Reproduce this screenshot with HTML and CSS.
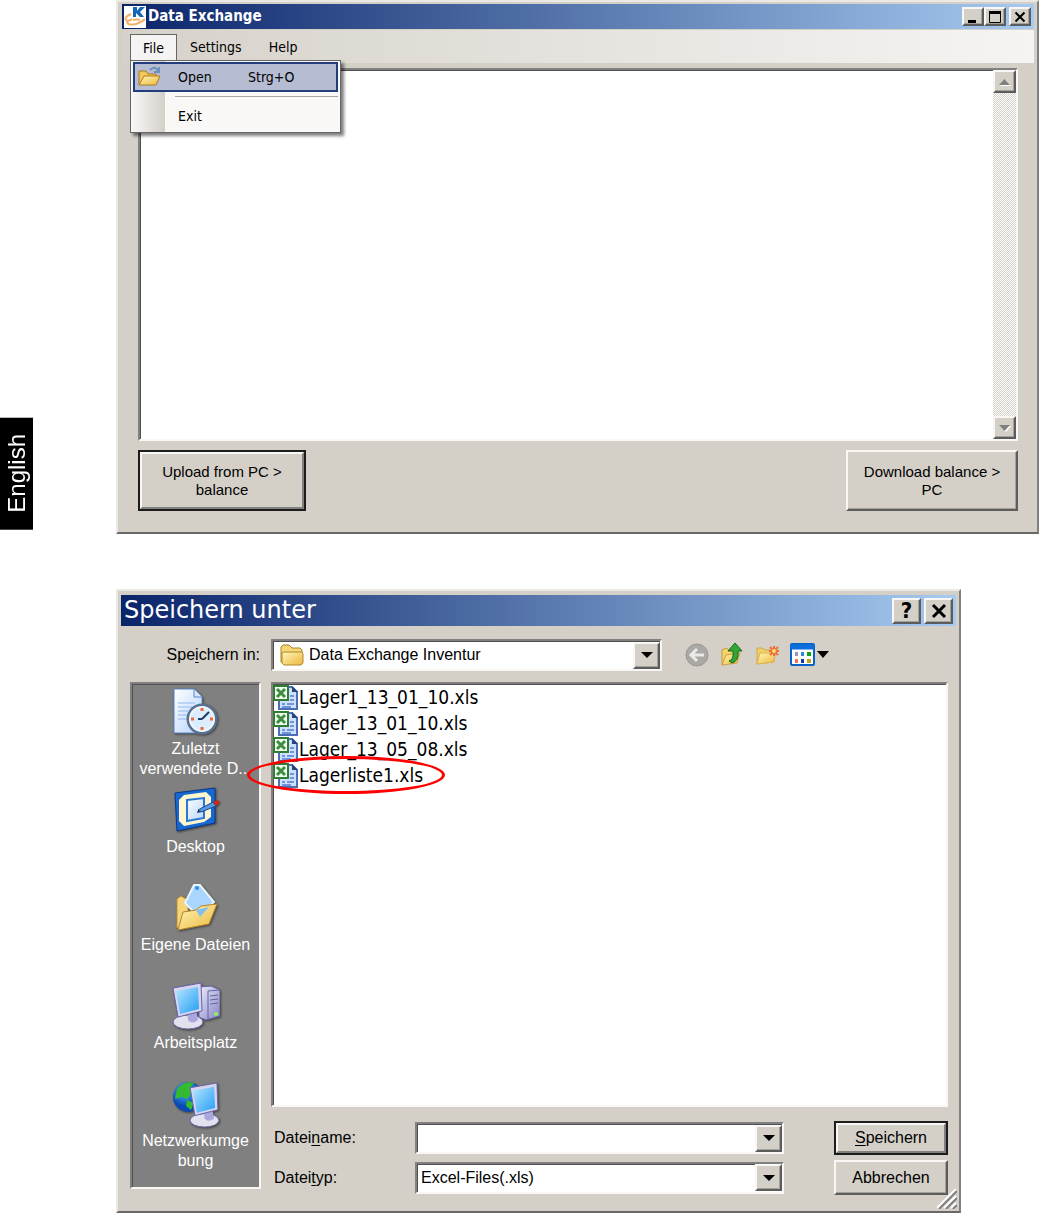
FILE: index.html
```html
<!DOCTYPE html>
<html lang="en">
<head>
<meta charset="utf-8">
<title>Data Exchange</title>
<link rel="stylesheet" href="styles.css">
</head>
<body>
<svg class="defs" aria-hidden="true">
  <defs>
    <linearGradient id="gold" x1="0" y1="0" x2="1" y2="1"><stop offset="0" stop-color="#fff6b8"/><stop offset="1" stop-color="#edb73c"/></linearGradient>
    <linearGradient id="screen" x1="0" y1="0" x2="1" y2="1"><stop offset="0" stop-color="#b5e6ff"/><stop offset="1" stop-color="#249df4"/></linearGradient>
    <linearGradient id="paper" x1="0" y1="0" x2="1" y2="1"><stop offset="0" stop-color="#ffffff"/><stop offset="1" stop-color="#b4d3fb"/></linearGradient>
    <linearGradient id="case" x1="0" y1="0" x2="1" y2="1"><stop offset="0" stop-color="#ececfa"/><stop offset="1" stop-color="#8583c4"/></linearGradient>
    <radialGradient id="globe" cx=".4" cy=".3"><stop offset="0" stop-color="#4db7ff"/><stop offset="1" stop-color="#0b49b4"/></radialGradient>
    <symbol id="excel" viewBox="0 0 25 25">
      <path d="M6 2h13l5 5v17H6z" fill="#cfe0ff" stroke="#4a6fb8" stroke-width="2"/>
      <path d="M19 1v6h6z" fill="#27457e"/>
      <path d="M17 11h4M17 15h4M9 19h3M14 19h7M9 22h9" stroke="#6f95dc" stroke-width="2"/>
      <path d="M1 1h14v14H1z" fill="#f4fbf2" stroke="#2f7d32" stroke-width="2"/>
      <path d="M4 4l8 8M12 4l-8 8" stroke="#3b8f3e" stroke-width="3"/>
    </symbol>
    <symbol id="monitor" viewBox="0 0 32 48">
      <ellipse cx="16" cy="40" rx="15" ry="7" fill="#e2e2ee" stroke="#6a68a0"/>
      <path d="M15 27h9l2 11q-6 5-10 0z" fill="#a9a7dc"/>
      <path d="M1 6l28-5 1 28-24 6z" fill="#d5d5f0" stroke="#6663a6"/>
      <path d="M4 9l22-4 1 22-19 5z" fill="url(#screen)"/>
    </symbol>
  </defs>
</svg>

<div class="page">
  <aside class="language">English</aside>

  <main class="windows">
    <section class="window app" aria-label="Data Exchange">
      <header class="titlebar">
        <svg class="app-logo" viewBox="0 0 22 22" aria-hidden="true">
          <rect width="22" height="22" fill="#fff"/>
          <path d="M9 1h4v4l3-4h5l-5 5 4 5h-4l-4-4v4H9z" fill="#1466b8"/>
          <path d="M7 8Q0 11 2 14q3 2 6-1M3 15q0 5 9 3 6-2 9-5M9 14q4-1 7 0" fill="none" stroke="#f4b069" stroke-width="2"/>
        </svg>
        <h1 class="title">Data Exchange</h1>
        <div class="controls">
          <button class="control raised" aria-label="Minimize"><svg viewBox="0 0 16 14"><path d="M3 11.5h8" stroke="#000" stroke-width="3"/></svg></button>
          <button class="control raised" aria-label="Maximize"><svg viewBox="0 0 16 14"><path d="M2.500 1.500h11v11h-11z" fill="none" stroke="#000"/><path d="M2 2.500h12" stroke="#000" stroke-width="3"/></svg></button>
          <button class="control control-close raised" aria-label="Close"><svg viewBox="0 0 16 14"><path d="M3.500 2.500l9 9M12.500 2.500l-9 9" stroke="#000" stroke-width="2"/></svg></button>
        </div>
      </header>
      <nav class="menubar">
        <div class="menu">
          <button class="menu-button menu-open">File</button>
          <div class="dropdown">
            <button class="entry entry-active">
              <svg class="entry-icon" viewBox="0 0 24 22" aria-hidden="true">
                <path d="M2 19V5h7l2 3h8v4" fill="#f3c757" stroke="#a77a29"/>
                <path d="M2 19l5-9h16l-4 9z" fill="url(#gold)" stroke="#b07a1e"/>
                <path d="M13 4q5-5 8 1M22 1v5h-5" fill="none" stroke="#6d8fbe" stroke-width="2"/>
              </svg>
              <span class="entry-name">Open</span><span>Strg+O</span>
            </button>
            <div class="divider"></div>
            <button class="entry"><span class="entry-icon"></span><span>Exit</span></button>
          </div>
        </div>
        <button class="menu-button">Settings</button>
        <button class="menu-button">Help</button>
      </nav>
      <div class="app-body">
        <div class="log sunken">
          <textarea class="log-text" aria-label="Transferred data"></textarea>
          <div class="scrollbar">
            <button class="scroll-arrow raised" aria-label="Scroll up"><svg viewBox="0 0 12 8"><path d="M1 8h11l-5-6z" fill="#fff"/><path d="M0 7h11L5.500 1z" fill="#808080"/></svg></button>
            <button class="scroll-arrow raised" aria-label="Scroll down"><svg viewBox="0 0 12 8"><path d="M1 2h11L7 8z" fill="#fff"/><path d="M0 1h11L5.500 7z" fill="#808080"/></svg></button>
          </div>
        </div>
        <div class="actions">
          <button class="action action-upload raised default">Upload from PC &gt;<br>balance</button>
          <button class="action action-download raised">Download balance &gt;<br>PC</button>
        </div>
      </div>
    </section>

    <section class="window dialog" aria-label="Speichern unter" lang="de">
      <header class="titlebar dialog-titlebar">
        <h2 class="dialog-title">Speichern unter</h2>
        <div class="controls dialog-controls">
          <button class="dialog-control raised" aria-label="Hilfe">?</button>
          <button class="dialog-control raised" aria-label="Schließen"><svg viewBox="0 0 18 16"><path d="M3 2l12 12M15 2L3 14" stroke="#000" stroke-width="3"/></svg></button>
        </div>
      </header>
      <div class="dialog-body">
        <label class="location-label" for="location">Spe<u>i</u>chern in:</label>
        <div class="location">
          <div class="combo sunken">
            <svg class="folder" viewBox="0 0 26 26" aria-hidden="true">
              <path d="M2 20V5l2-2h6l3 3h8l2 2v12z" fill="#f5d775" stroke="#a7842a"/>
              <path d="M3 21V11l2-1h18l1 2v9l-2 2H5z" fill="url(#gold)" stroke="#ae892d"/>
            </svg>
            <select class="combo-field" id="location"><option>Data Exchange Inventur</option></select>
            <span class="combo-arrow raised"><svg viewBox="0 0 12 6"><path d="M0 0h12L6 6z"/></svg></span>
          </div>
          <div class="tools">
            <button class="tool" aria-label="Zurück"><svg viewBox="0 0 24 24"><circle cx="12" cy="12" r="11" fill="#aaa9a5" stroke="#989794"/><path d="M19 12H7M12 6l-6 6 6 6" fill="none" stroke="#eceae6" stroke-width="3"/></svg></button>
            <button class="tool" aria-label="Übergeordneter Ordner"><svg viewBox="0 0 24 24"><path d="M2 22V7l4-2 3 2h8v10z" fill="#f2d36c" stroke="#c49b3a"/><path d="M2 22l4-10 14-2-3 10z" fill="url(#gold)" stroke="#cba13c"/><path d="M9 18q5-1 4-10H8l7-8 7 8h-4q1 10-6 12z" fill="#33a437" stroke="#146c1b"/></svg></button>
            <button class="tool" aria-label="Neuer Ordner"><svg viewBox="0 0 24 24"><path d="M2 21V5h5l3 2h9v12z" fill="#f1cf68" stroke="#d1a848"/><path d="M2 21l3-11h16l-3 9z" fill="url(#gold)" stroke="#dcb450"/><path d="M19 3v10M14 8h10M15 4l8 8M23 4l-8 8" stroke="#ed6d42" stroke-width="2"/><circle cx="19" cy="8" r="2" fill="#ffe25d"/></svg></button>
            <button class="tool tool-view" aria-label="Ansicht"><svg viewBox="0 0 40 24"><rect x="1" y="1" width="23" height="21" rx="1" fill="#fff" stroke="#0862c9" stroke-width="2"/><path d="M1 4h23" stroke="#0b6fdf" stroke-width="5"/><path d="M5 9h3v4H5z" fill="#9b90c8"/><path d="M11 9h3v4h-3z" fill="#3484e0"/><path d="M17 9h4v4h-4z" fill="#0da31a"/><path d="M5 16h3v4H5z" fill="#ff7048"/><path d="M11 16h3v4h-3z" fill="#12399c"/><path d="M17 16h4v4h-4z" fill="#cb9f16"/><path d="M27 8h12l-6 7z"/></svg></button>
          </div>
        </div>

        <nav class="places sunken">
          <button class="place">
            <svg class="place-icon" viewBox="0 0 48 48" aria-hidden="true">
              <path d="M2 1h20l8 8v36H2z" fill="url(#paper)" stroke="#5884c6"/>
              <path d="M22 1v8h8" fill="#d5e8ff" stroke="#5884c6"/>
              <path d="M6 15h17M6 19h14M6 23h10M6 27h9M6 31h9" stroke="#90b9f2"/>
              <circle cx="30" cy="31" r="14" fill="#dbeeff" stroke="#59718f" stroke-width="3"/>
              <circle cx="30" cy="31" r="12" fill="none" stroke="#edf7ff" stroke-width="2"/>
              <path d="M30 31l7-7M30 31h-4" stroke="#233d60" stroke-width="2"/>
              <path d="M30 20v3M30 39v3M19 31h3M38 31h3" stroke="#f2682f" stroke-width="3"/>
            </svg>
            <span>Zuletzt<br>verwendete D...</span>
          </button>
          <button class="place">
            <svg class="place-icon" viewBox="0 0 48 48" aria-hidden="true">
              <path d="M3 7l40-5v35L5 45z" fill="#1768d0" stroke="#08398c"/>
              <path d="M12 9l22-3 5 5v20l-7 5-20 4-5-5V14z" fill="#fff5cf"/>
              <path d="M15 14l17-2v20l-17 3z" fill="url(#paper)" stroke="#2878d4" stroke-width="2"/>
              <path d="M26 24l15-8 3 4-15 6z" fill="#5997e2" stroke="#164c91"/>
              <path d="M41 16l4-2 3 2-4 4z" fill="#cf2717"/><path d="M26 24l3 2-4 1z" fill="#152e54"/>
            </svg>
            <span>Desktop</span>
          </button>
          <button class="place">
            <svg class="place-icon" viewBox="0 0 48 48" aria-hidden="true">
              <path d="M5 44V15l4-3 7 4v24z" fill="#f6d478" stroke="#c0923a"/>
              <path d="M22 1h6l14 17-15 15-14-14z" fill="#a9d5ff" stroke="#e7f5ff" stroke-width="2"/>
              <circle cx="25" cy="4" r="2" fill="#328de8"/>
              <path d="M6 46l5-18 13-2 5-4 16-2-8 20z" fill="url(#gold)" stroke="#b48427"/>
              <path d="M24 26l13-3-9 10z" fill="#80bff2"/>
            </svg>
            <span>Eigene Dateien</span>
          </button>
          <button class="place">
            <svg class="place-icon" viewBox="0 0 48 48" aria-hidden="true">
              <path d="M27 5l12-1 9 4v26l-14 4-7-3z" fill="url(#case)" stroke="#6562a5"/>
              <path d="M36 9l12-1M36 9v29M38 14l8-1M38 18l8-1M38 22l8-1" stroke="#6562a5"/>
              <circle cx="44" cy="32" r="2" fill="#8df35a"/>
              <use href="#monitor" width="32" height="48"/>
            </svg>
            <span>Arbeitsplatz</span>
          </button>
          <button class="place">
            <svg class="place-icon" viewBox="0 0 48 48" aria-hidden="true">
              <circle cx="16" cy="17" r="15" fill="url(#globe)"/>
              <path d="M5 9q7-9 17-6l-4 5 4 2-7 9-5-2-7 2zM15 20l7 3-3 7-5-4z" fill="#34b930"/>
              <use href="#monitor" x="17" y="2" width="31" height="46"/>
            </svg>
            <span>Netzwerkumge<br>bung</span>
          </button>
        </nav>

        <div class="files sunken">
          <ul class="file-list">
            <li class="file"><svg class="file-icon" aria-hidden="true"><use href="#excel"/></svg>Lager1_13_01_10.xls</li>
            <li class="file"><svg class="file-icon" aria-hidden="true"><use href="#excel"/></svg>Lager_13_01_10.xls</li>
            <li class="file"><svg class="file-icon" aria-hidden="true"><use href="#excel"/></svg>Lager_13_05_08.xls</li>
            <li class="file marked"><svg class="file-icon" aria-hidden="true"><use href="#excel"/></svg>Lagerliste1.xls</li>
          </ul>
        </div>

        <form class="save-form">
          <label for="filename">Datei<u>n</u>ame:</label>
          <div class="combo sunken">
            <input class="combo-field" id="filename" type="text">
            <button class="combo-arrow raised" type="button" aria-label="Dateinamen anzeigen"><svg viewBox="0 0 12 6"><path d="M0 0h12L6 6z"/></svg></button>
          </div>
          <button class="form-button form-save raised default" type="submit"><u>S</u>peichern</button>
          <label for="filetype">Datei<u>t</u>yp:</label>
          <div class="combo sunken">
            <select class="combo-field" id="filetype"><option>Excel-Files(.xls)</option></select>
            <span class="combo-arrow raised"><svg viewBox="0 0 12 6"><path d="M0 0h12L6 6z"/></svg></span>
          </div>
          <button class="form-button raised" type="button">Abbrechen</button>
        </form>
      </div>
      <svg class="grip" viewBox="0 0 20 20" aria-hidden="true"><path d="M0 19L19 0M7 19L19 7M14 19l5-5" stroke="#fff" stroke-width="2"/><path d="M2 20L20 2M9 20L20 9M16 20l4-4" stroke="#808080" stroke-width="2"/></svg>
    </section>
  </main>
</div>
</body>
</html>
```
FILE: styles.css
```css
*,
*::after {
  box-sizing: border-box;
}

body {
  margin: 0;
  background: #fff;
  color: #000;
  font: 16px/20px "Liberation Sans", Arial, sans-serif;
}

button,
input,
select,
textarea {
  margin: 0;
  padding: 0;
  border: 0;
  border-radius: 0;
  background: none;
  color: inherit;
  font: inherit;
}

h1,
h2,
ul {
  margin: 0;
  padding: 0;
}

svg {
  display: block;
  flex: none;
}

u {
  text-underline-offset: 2px;
}

.defs {
  position: absolute;
  width: 0;
  height: 0;
}

.page {
  display: flex;
  align-items: flex-start;
  gap: 83px;
  padding-right: 4px;
}

.language {
  flex: none;
  width: 33px;
  margin-top: 418px;
  padding: 17px 0 16px;
  background: #000;
  color: #fff;
  font-size: 24px;
  line-height: 33px;
  writing-mode: vertical-rl;
  transform: rotate(180deg);
}

.windows {
  flex: 1;
  min-width: 0;
}

/* Bevels */
.raised {
  border: 2px solid;
  border-color: #f8f7f5 #5c5c5c #5c5c5c #f8f7f5;
  background: #d4d0c8;
  box-shadow: inset -1px -1px #a5a29c;
}

.default {
  outline: 2px solid #1c1c1c;
  outline-offset: -2px;
  border-width: 4px;
  border-color: #f8f7f5 #808080 #808080 #f8f7f5;
  box-shadow: none;
}

.sunken {
  border: 2px solid;
  border-color: #808080 #f8f7f5 #f8f7f5 #808080;
  background: #fff;
  box-shadow: inset 1px 1px #505050;
}

.window {
  position: relative;
  border: 2px solid;
  border-color: #ebe9e5 #808080 #686868 #ebe9e5;
  background: #d4d0c8;
}

.titlebar {
  display: flex;
  align-items: center;
  background: linear-gradient(90deg, #0a246a, #a6caf0);
  color: #fff;
}

.controls {
  display: flex;
  margin-left: auto;
}

/* Main window */
.app {
  padding: 2px 3px 21px 4px;
}

.app .titlebar {
  height: 25px;
  padding: 0 3px 0 2px;
}

.app-logo {
  width: 22px;
  height: 22px;
}

.title {
  margin-left: 2px;
  font: bold 15px/25px "DejaVu Sans Condensed", "DejaVu Sans", sans-serif;
}

.control {
  display: grid;
  place-items: center;
  width: 22px;
  height: 19px;
}

.control svg {
  width: 16px;
  height: 14px;
}

.control-close {
  margin-left: 3px;
}

.menubar {
  display: flex;
  height: 34px;
  padding: 4px 8px 0;
  border-top: 1px solid #d4d0c8;
  background: linear-gradient(90deg, #d6d2ca, #f5f4f2);
  font: 14px/24px "DejaVu Sans Condensed", "DejaVu Sans", sans-serif;
}

.menu {
  position: relative;
}

.menu-button {
  height: 27px;
  padding: 0 14px 2px 13px;
}

.menu-open {
  width: 47px;
  padding: 0 0 1px;
  border: 1px solid #666;
  border-bottom: 0;
  background: #f5f4f2;
}

.dropdown {
  position: absolute;
  z-index: 1;
  top: 26px;
  left: 0;
  width: 211px;
  padding: 1px 2px;
  border: 1px solid #666;
  background: linear-gradient(90deg, #f9f8f7, #d4d0c8 34px, #f9f8f7 34px);
  box-shadow: 3px 3px 3px #00000080;
}

.entry {
  display: flex;
  align-items: center;
  width: 100%;
  height: 30px;
  padding: 0 3px;
  border: 1px solid transparent;
  text-align: left;
}

.entry-active {
  border: 2px solid #233c7c;
  padding: 0 2px;
  background: #b6bdd2;
}

.entry-icon {
  width: 24px;
  height: 22px;
  margin-right: 17px;
}

.entry-name {
  width: 70px;
}

.divider {
  height: 1px;
  margin: 4px 0 4px 42px;
  background: #a6a6a6;
}

.app-body {
  padding: 5px 16px 0;
}

.log {
  display: flex;
  height: 373px;
}

.log-text {
  flex: 1;
  min-width: 0;
  padding: 4px;
  resize: none;
}

.scrollbar {
  display: flex;
  flex-direction: column;
  justify-content: space-between;
  width: 23px;
  background: repeating-conic-gradient(#fff 0 25%, #d4d0c8 0 50%) 0 0 / 2px 2px;
}

.scroll-arrow {
  display: grid;
  place-items: center;
  height: 23px;
}

.scroll-arrow svg {
  width: 12px;
  height: 8px;
}

.actions {
  display: flex;
  justify-content: space-between;
  margin-top: 9px;
}

.action {
  height: 61px;
  font-size: 15px;
  line-height: 18px;
}

.action-upload {
  width: 168px;
}

.action-download {
  width: 172px;
}

/* Save dialog */
.dialog {
  margin: 55px 78px 0 0;
  padding: 4px 3px 16px;
}

.dialog-titlebar {
  height: 31px;
  padding: 0 3px;
}

.dialog-title {
  font: 24px/31px "DejaVu Sans", Verdana, sans-serif;
}

.dialog-controls {
  gap: 3px;
}

.dialog-control {
  display: grid;
  place-items: center;
  width: 29px;
  height: 26px;
  color: #000;
  font: bold 22px/22px "DejaVu Sans Condensed", "DejaVu Sans", sans-serif;
}

.dialog-control svg {
  width: 18px;
  height: 16px;
}

.dialog-body {
  display: grid;
  grid-template-columns: 131px 1fr;
  column-gap: 10px;
  padding: 13px 8px 0 9px;
}

.location-label {
  padding: 6px 1px 0 0;
  text-align: right;
}

.location {
  display: flex;
  margin-bottom: 11px;
}

.location .combo {
  flex: 1;
}

.combo {
  display: flex;
  align-items: center;
  min-width: 0;
  height: 32px;
}

.combo-field {
  flex: 1;
  align-self: stretch;
  min-width: 0;
  padding-left: 4px;
  appearance: none;
  outline: 0;
}

.combo-arrow {
  display: grid;
  place-items: center;
  width: 27px;
  height: 27px;
}

.combo-arrow svg {
  width: 12px;
  height: 6px;
}

.folder {
  width: 26px;
  height: 26px;
  margin-left: 6px;
}

.tools {
  display: flex;
  align-items: center;
  gap: 11px;
  padding: 0 118px 0 23px;
}

.tool {
  width: 24px;
  height: 24px;
}

.tool-view {
  width: 40px;
}

.tool svg {
  width: 100%;
  height: 100%;
}

.places {
  grid-row: 2 / 4;
  align-self: start;
  height: 507px;
  padding-top: 4px;
  background: #808080;
  color: #fff;
}

.place {
  display: flex;
  flex-direction: column;
  align-items: center;
  gap: 3px;
  width: 100%;
  height: 98px;
  white-space: nowrap;
}

.place-icon {
  width: 48px;
  height: 48px;
  filter: drop-shadow(1px 1px 1px #00000080);
}

.files {
  height: 425px;
}

.file-list {
  list-style: none;
}

.file {
  display: flex;
  align-items: center;
  width: max-content;
  height: 26px;
  gap: 1px;
  font: 19px/26px "DejaVu Sans Condensed", "DejaVu Sans", sans-serif;
}

.file-icon {
  width: 25px;
  height: 25px;
}

.marked {
  position: relative;
}

/* Red ring round the chosen file */
.marked::after {
  content: "";
  position: absolute;
  top: -6px;
  left: -26px;
  width: 198px;
  height: 38px;
  border: 3px solid #f00;
  border-radius: 50%;
}

.save-form {
  display: grid;
  grid-template-columns: 144px 1fr 114px;
  grid-template-rows: 34px 35px;
  row-gap: 5px;
  align-items: center;
  margin-top: 14px;
}

.save-form label {
  padding-left: 3px;
}

.form-button {
  align-self: stretch;
}

.save-form .combo {
  margin-right: 50px;
}

.grip {
  position: absolute;
  right: 2px;
  bottom: 2px;
  width: 20px;
  height: 20px;
}
```
